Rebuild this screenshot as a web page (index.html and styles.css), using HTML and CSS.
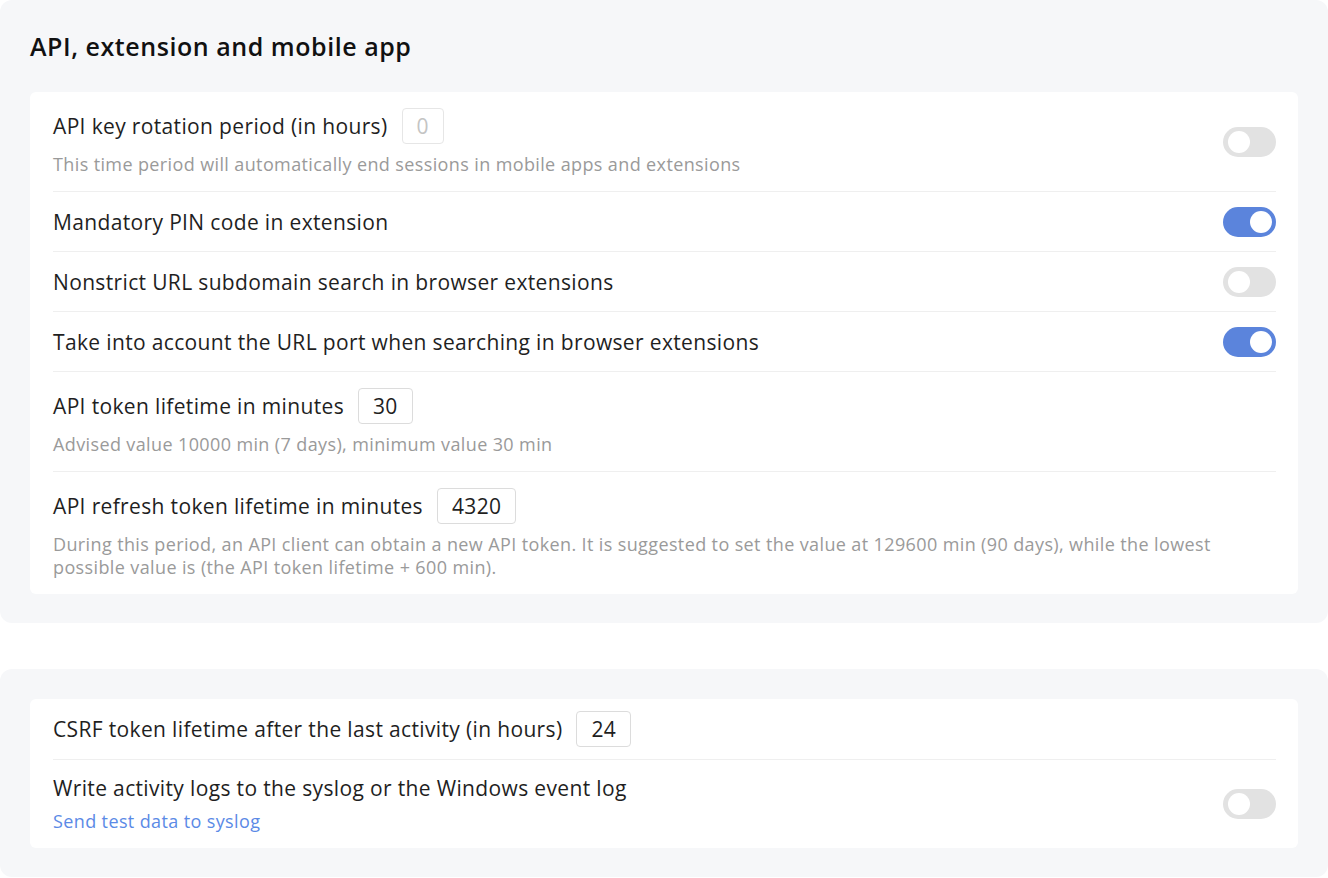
FILE: index.html
```html
<!DOCTYPE html>
<html>
<head>
<meta charset="utf-8">
<link rel="stylesheet" href="styles.css">
</head>
<body>
<section class="panel">
  <h2 class="panel-title">API, extension and mobile app</h2>
  <div class="card">
    <div class="row">
      <div class="row-main">
        <div class="label-line">
          <span class="label">API key rotation period (in hours)</span>
          <span class="num-input disabled">0</span>
        </div>
        <div class="desc">This time period will automatically end sessions in mobile apps and extensions</div>
      </div>
      <span class="toggle"></span>
    </div>
    <div class="row">
      <div class="row-main"><div class="label-line"><span class="label">Mandatory PIN code in extension</span></div></div>
      <span class="toggle on"></span>
    </div>
    <div class="row">
      <div class="row-main"><div class="label-line"><span class="label">Nonstrict URL subdomain search in browser extensions</span></div></div>
      <span class="toggle"></span>
    </div>
    <div class="row">
      <div class="row-main"><div class="label-line"><span class="label">Take into account the URL port when searching in browser extensions</span></div></div>
      <span class="toggle on"></span>
    </div>
    <div class="row">
      <div class="row-main">
        <div class="label-line">
          <span class="label">API token lifetime in minutes</span>
          <span class="num-input">30</span>
        </div>
        <div class="desc">Advised value 10000 min (7 days), minimum value 30 min</div>
      </div>
    </div>
    <div class="row">
      <div class="row-main">
        <div class="label-line">
          <span class="label">API refresh token lifetime in minutes</span>
          <span class="num-input">4320</span>
        </div>
        <div class="desc">During this period, an API client can obtain a new API token. It is suggested to set the value at 129600 min (90 days), while the lowest possible value is (the API token lifetime + 600 min).</div>
      </div>
    </div>
  </div>
</section>
<section class="panel panel-plain">
  <div class="card">
    <div class="row">
      <div class="row-main tight">
        <div class="label-line">
          <span class="label">CSRF token lifetime after the last activity (in hours)</span>
          <span class="num-input">24</span>
        </div>
      </div>
    </div>
    <div class="row">
      <div class="row-main loose">
        <div class="label-line"><span class="label">Write activity logs to the syslog or the Windows event log</span></div>
        <a class="link" href="#">Send test data to syslog</a>
      </div>
      <span class="toggle"></span>
    </div>
  </div>
</section>
</body>
</html>
```

FILE: styles.css
```css
html, body {
  margin: 0;
  padding: 0;
  background: #ffffff;
}
body {
  font-family: "Open Sans", "Noto Sans", sans-serif;
  color: #1f1f1f;
}
.panel {
  background: #f6f7f9;
  border-radius: 12px;
  padding: 29px 30px 29px 30px;
  margin-bottom: 46px;
}
.panel-plain {
  padding-top: 30px;
  padding-bottom: 29px;
  margin-bottom: 0;
}
.panel-title {
  margin: 0 0 29px 0;
  font-size: 25px;
  font-weight: 600;
  letter-spacing: 0.55px;
  line-height: 34px;
  color: #111;
}
.card {
  background: #fff;
  border-radius: 6px;
  padding: 0 22px 0 23px;
}
.row {
  display: flex;
  align-items: center;
  border-bottom: 1px solid #efefef;
  min-height: 59px;
}
.row:last-child {
  border-bottom: none;
}
.row-main {
  flex: 1;
  padding: 16px 0 15px;
}
.row-main.tight {
  padding: 12px 0 12px;
}
.row-main.loose {
  padding: 14px 0 15px;
}
.label-line {
  display: flex;
  align-items: center;
  gap: 14px;
  min-height: 28px;
}
.label {
  font-size: 21px;
  letter-spacing: 0.35px;
  line-height: 28px;
  color: #1f1f1f;
}
.num-input {
  display: inline-flex;
  align-items: center;
  box-sizing: border-box;
  height: 36px;
  padding: 0 14px;
  border: 1px solid #dcdcdc;
  border-radius: 4px;
  font-size: 21px;
  letter-spacing: 0.35px;
  color: #1f1f1f;
  background: #fff;
}
.num-input.disabled {
  color: #c4c4c4;
  border-color: #e6e6e6;
}
.desc {
  margin-top: 9px;
  font-size: 18px;
  letter-spacing: 0.38px;
  line-height: 23px;
  color: #9a9a9a;
}
.link {
  display: block;
  margin-top: 8px;
  font-size: 18px;
  letter-spacing: 0.38px;
  line-height: 23px;
  color: #5b8ae6;
  text-decoration: none;
}
.toggle {
  position: relative;
  flex: none;
  width: 53px;
  height: 30px;
  border-radius: 15px;
  background: #e2e2e2;
  margin-left: 20px;
}
.toggle::after {
  content: "";
  position: absolute;
  top: 4px;
  left: 5px;
  width: 22px;
  height: 22px;
  border-radius: 50%;
  background: #fff;
}
.toggle.on {
  background: #5b84dc;
}
.toggle.on::after {
  left: 27px;
}
```
